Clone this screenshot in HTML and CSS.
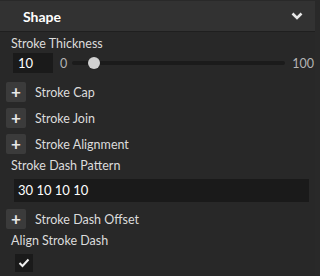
FILE: index.html
```html
<!DOCTYPE html>
<html>
<head>
    <title>Shape</title>
    <link rel="stylesheet" href="styles.css">
</head>
<body>
    <div class="panel">
        <!-- Section header -->
        <div class="header">
            <span class="header-title">Shape</span>
            <svg class="chevron" width="12" height="8" viewBox="0 0 12 8">
                <path d="M1.5 1.5 L6 6 L10.5 1.5" fill="none" stroke="#e6e6e6" stroke-width="2.6"/>
            </svg>
        </div>

        <div class="content">
            <p class="label">Stroke Thickness</p>
            <div class="slider-row">
                <div class="num-input">10</div>
                <span class="range-min">0</span>
                <div class="track">
                    <div class="thumb" style="left: 10%"></div>
                </div>
                <span class="range-max">100</span>
            </div>

            <div class="expander"><span class="plus">+</span><span class="expander-text">Stroke Cap</span></div>
            <div class="expander"><span class="plus">+</span><span class="expander-text">Stroke Join</span></div>
            <div class="expander"><span class="plus">+</span><span class="expander-text">Stroke Alignment</span></div>

            <p class="label">Stroke Dash Pattern</p>
            <div class="text-input">30 10 10 10</div>

            <div class="expander"><span class="plus">+</span><span class="expander-text">Stroke Dash Offset</span></div>

            <p class="label">Align Stroke Dash</p>
            <div class="checkbox">
                <svg width="12" height="10" viewBox="0 0 12 10">
                    <path d="M1.5 5 L4.5 8 L10.5 1.5" fill="none" stroke="#f0f0f0" stroke-width="2"/>
                </svg>
            </div>
        </div>
    </div>
</body>
</html>
```

FILE: styles.css
```css
body {
    margin: 0;
    background-color: #292929;
    font-family: "Lato", "Open Sans", sans-serif;
    font-size: 12.5px;
    color: #dcdcdc;
}

.panel {
    width: 315px;
    height: 276px;
    background-color: #282828;
}

.header {
    height: 30px;
    margin-top: 1px;
    background-color: #323232;
    border-bottom: 1px solid #1f1f1f;
    display: flex;
    align-items: center;
    justify-content: space-between;
    padding: 0 12px 0 23px;
}

.header-title {
    font-size: 14px;
    font-weight: bold;
    color: #ffffff;
}

.content {
    padding: 3px 0 0 11px;
}

.label {
    margin: 0;
    height: 18px;
    line-height: 18px;
}

.slider-row {
    display: flex;
    align-items: center;
    height: 20px;
    margin-left: 2px;
}

.num-input {
    width: 35px;
    height: 20px;
    line-height: 20px;
    padding-left: 5px;
    background-color: #1a1a1a;
    color: #ffffff;
    font-size: 13px;
}

.range-min {
    margin-left: 7px;
    color: #b4b4b4;
}

.track {
    position: relative;
    width: 213px;
    height: 4px;
    margin-left: 5px;
    background-color: #1b1b1b;
    border-radius: 2px;
}

.thumb {
    position: absolute;
    top: -4px;
    width: 12px;
    height: 12px;
    margin-left: -6px;
    border-radius: 50%;
    background-color: #d2d2d2;
}

.range-max {
    margin-left: 7px;
    color: #b4b4b4;
}

.expander {
    display: flex;
    align-items: center;
    margin: 6px 0 0 -5px;
    height: 20px;
}

.slider-row + .expander {
    margin-top: 9px;
}

.plus {
    width: 20px;
    height: 20px;
    line-height: 19px;
    text-align: center;
    border-radius: 2px;
    background-color: #3b3b3b;
    color: #e8e8e8;
    font-size: 17px;
    font-weight: bold;
}

.expander-text {
    margin-left: 9px;
}

.expander + .label {
    margin-top: 3px;
}

.text-input {
    width: 291px;
    height: 23px;
    line-height: 23px;
    margin: 4px 0 0 3px;
    padding-left: 4px;
    background-color: #1a1a1a;
    color: #ffffff;
    font-size: 13px;
}

.text-input + .expander {
    margin-top: 7px;
}

.checkbox {
    width: 18px;
    height: 18px;
    margin: 4px 0 0 4px;
    background-color: #1a1a1a;
    display: flex;
    align-items: center;
    justify-content: center;
}
```
